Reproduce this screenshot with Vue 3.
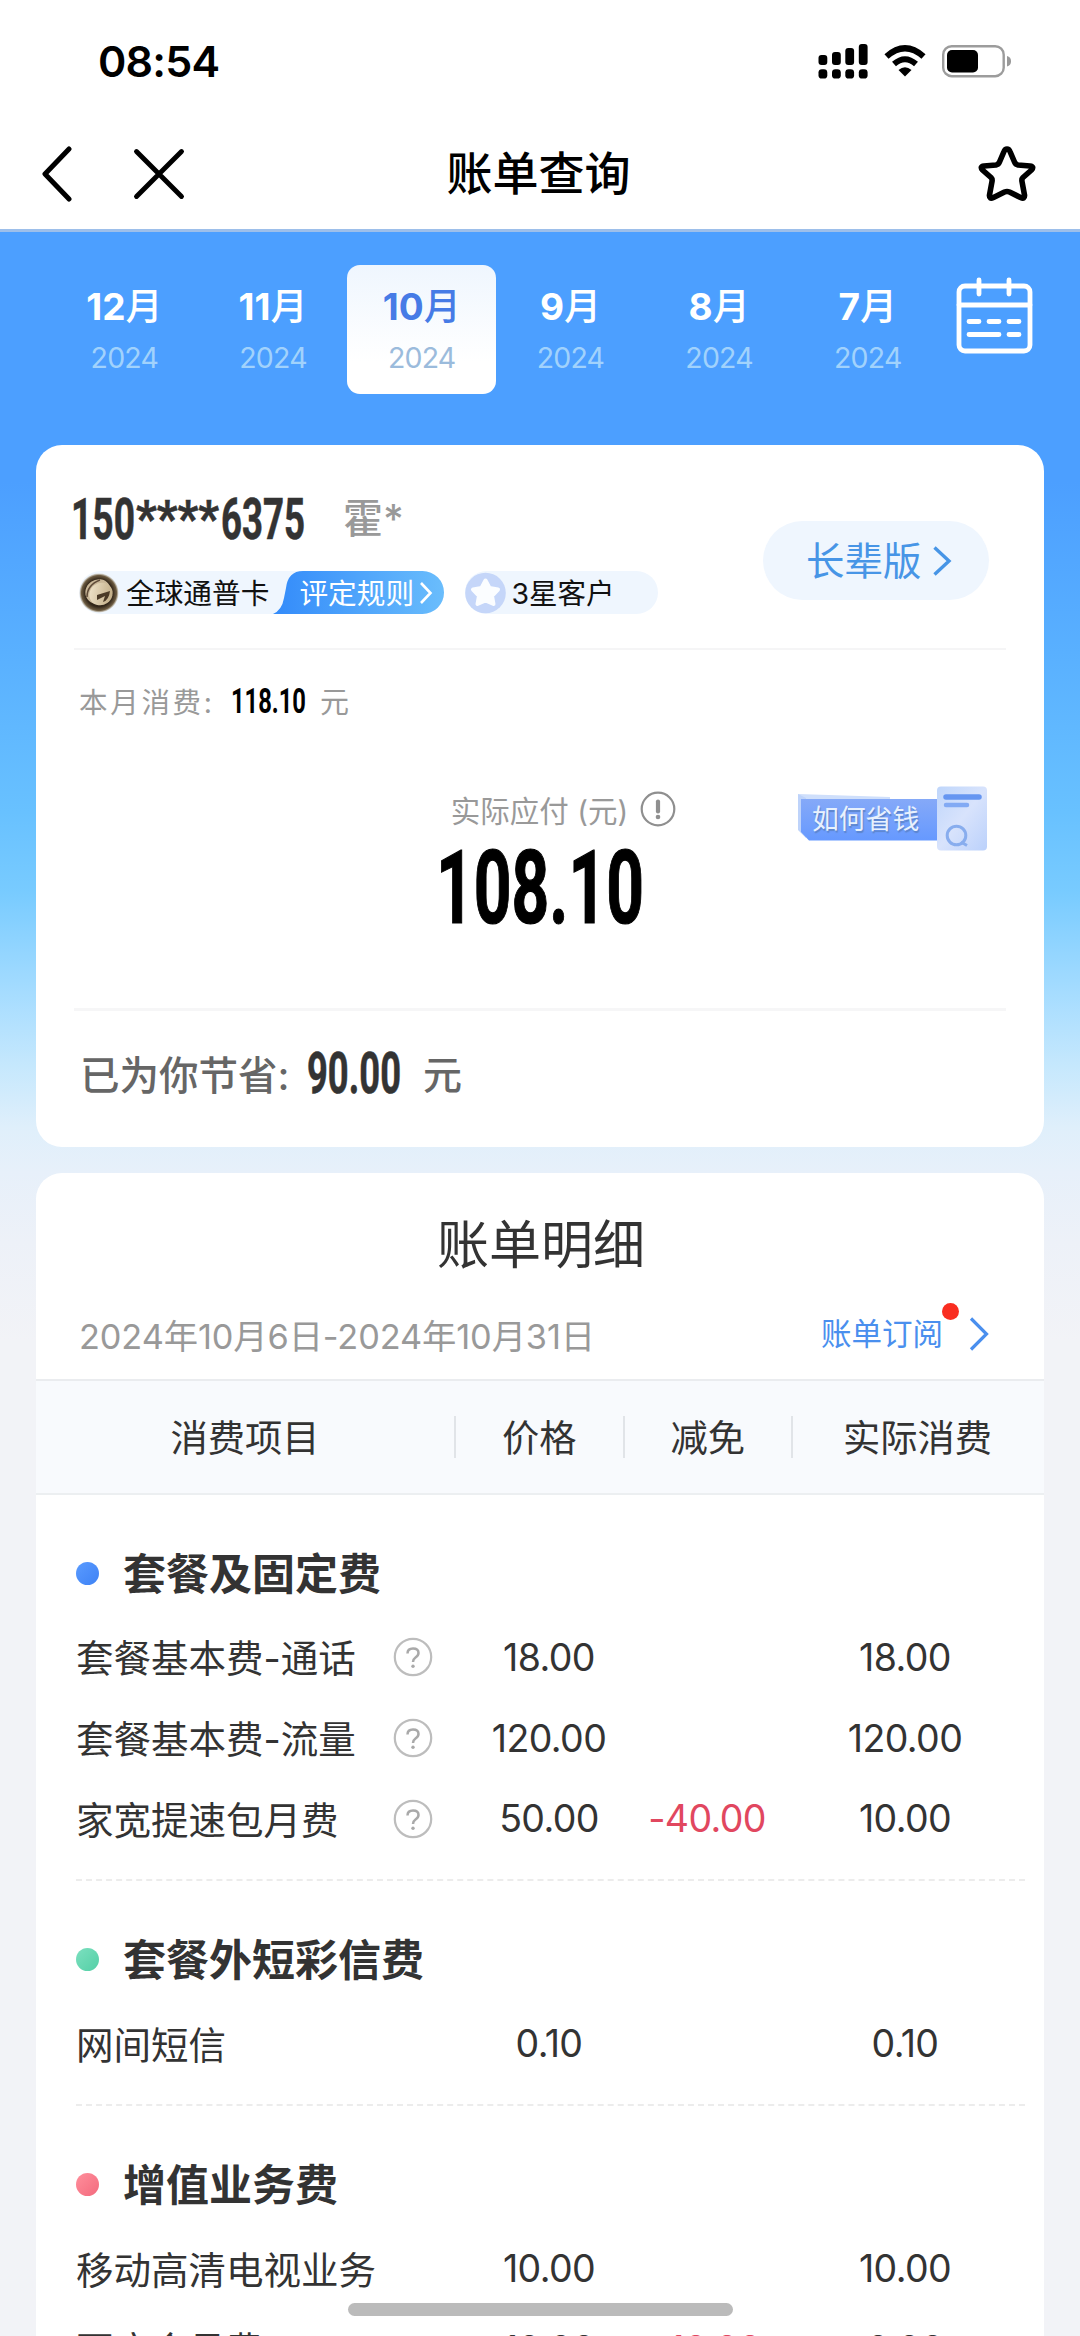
<script setup>
const months = [
  { m: '12', y: '2024' },
  { m: '11', y: '2024' },
  { m: '10', y: '2024', active: true },
  { m: '9', y: '2024' },
  { m: '8', y: '2024' },
  { m: '7', y: '2024' },
]

const sections = [
  {
    title: '套餐及固定费',
    tone: 'blue',
    rows: [
      { name: '套餐基本费-通话', help: true, price: '18.00', off: '', real: '18.00' },
      { name: '套餐基本费-流量', help: true, price: '120.00', off: '', real: '120.00' },
      { name: '家宽提速包月费', help: true, price: '50.00', off: '-40.00', real: '10.00' },
    ],
  },
  {
    title: '套餐外短彩信费',
    tone: 'green',
    rows: [{ name: '网间短信', price: '0.10', off: '', real: '0.10' }],
  },
  {
    title: '增值业务费',
    tone: 'red',
    rows: [
      { name: '移动高清电视业务', price: '10.00', off: '', real: '10.00' },
      { name: '百度会员费', price: '10.00', off: '-10.00', real: '0.00' },
    ],
  },
]
</script>

<template>
  <div class="screen">
    <div class="status">
      <span class="clock">08:54</span>
      <div class="status-icons">
        <svg class="signal" width="50" height="35" viewBox="0 0 50 35">
          <rect x="0.5" y="11" width="8.8" height="10" rx="3" />
          <rect x="14" y="8" width="8.8" height="13" rx="3" />
          <rect x="27.3" y="4" width="8.8" height="17" rx="3" />
          <rect x="40.8" y="0" width="8.8" height="21" rx="3" />
          <rect x="0.5" y="25.2" width="8.8" height="9.4" rx="3.4" />
          <rect x="14" y="25.2" width="8.8" height="9.4" rx="3.4" />
          <rect x="27.3" y="25.2" width="8.8" height="9.4" rx="3.4" />
          <rect x="40.8" y="25.2" width="8.8" height="9.4" rx="3.4" />
        </svg>
        <svg class="wifi" width="42" height="32" viewBox="0 0 42 32">
          <path d="M2.5 11.5 Q21 -5 39.5 11.5" fill="none" stroke="#000" stroke-width="6.2" />
          <path d="M10 19 Q21 9.500 32 19" fill="none" stroke="#000" stroke-width="6" />
          <path d="M14.500 25 Q21 19.500 27.500 25 L21 31.500 Z" />
        </svg>
        <svg class="battery" width="70" height="33" viewBox="0 0 70 33">
          <rect x="1.2" y="1.2" width="60.500" height="30" rx="8.500" fill="none" stroke="#9c9c9c" stroke-width="2.400" />
          <rect x="5" y="5" width="31" height="22.500" rx="5" />
          <path d="M65 11 Q69 12 69 16.300 Q69 20.500 65 21.500 Z" fill="#999" />
        </svg>
      </div>
    </div>

    <div class="nav">
      <div class="nav-left">
        <svg class="back" width="32" height="56" viewBox="0 0 32 56">
          <path d="M28 3 L4 28 L28 53" fill="none" stroke="#000" stroke-width="5" stroke-linecap="round" stroke-linejoin="round" />
        </svg>
        <svg width="52" height="52" viewBox="0 0 52 52">
          <path d="M3.500 3.500 L48.500 48.500 M48.500 3.500 L3.500 48.500" fill="none" stroke="#000" stroke-width="4.900" stroke-linecap="round" />
        </svg>
      </div>
      <h1>账单查询</h1>
      <svg class="fav" width="58" height="58" viewBox="0 0 58 58">
        <path d="M29 4 Q31 4 32 6.500 L36.500 17 Q37.500 19.500 40 20 L52 21 Q56.500 21.500 53.500 25 L45 32.500 Q43.500 34 44 36.500 L46.500 50 Q47 54.500 42.500 52.500 L31.500 47 Q29 46 26.500 47 L15.500 52.500 Q11 54.500 11.500 50 L14 36.500 Q14.500 34 13 32.500 L4.500 25 Q1.500 21.500 6 21 L18 20 Q20.500 19.500 21.500 17 L26 6.500 Q27 4 29 4 Z" fill="none" stroke="#000" stroke-width="5.600" stroke-linejoin="round" />
      </svg>
    </div>

    <div class="page">
      <div class="months">
        <div v-for="t in months" :key="t.m" class="month" :class="{ active: t.active }">
          <div class="m">{{ t.m }}<span>月</span></div>
          <div class="y">{{ t.y }}</div>
        </div>
        <svg class="calendar" width="77" height="77" viewBox="0 0 77 77">
          <g fill="none" stroke="#fff" stroke-width="4.800" stroke-linecap="round">
            <rect x="3" y="9" width="71" height="65" rx="6" />
            <path d="M3 28 H74" />
            <path d="M23 3 V17 M53 3 V17" />
            <path d="M13 44.500 H23 M33 44.500 H43 M53 44.500 H63 M13 57.500 H43 M53 57.500 H63" />
          </g>
        </svg>
      </div>

      <section class="card summary">
        <div class="user">
          <div class="who">
            <div class="id-line">
              <svg width="236" height="46" viewBox="0 0 236 46" class="din">
                <text y="43" font-size="57" fill="#333" stroke="#333" stroke-width="0.600"><tspan x="-1" textLength="64" lengthAdjust="spacingAndGlyphs">150</tspan><tspan x="64" textLength="83" lengthAdjust="spacingAndGlyphs" font-size="50" dy="-3">****</tspan><tspan x="149" dy="3" textLength="84" lengthAdjust="spacingAndGlyphs">6375</tspan></text>
              </svg>
              <span class="name">霍*</span>
            </div>
            <div class="tags">
              <div class="level">
                <svg class="coin" width="40" height="40" viewBox="0 0 40 40">
                  <defs>
                    <radialGradient id="coinEdge">
                      <stop offset="0.700" stop-color="#33271a" />
                      <stop offset="0.900" stop-color="#6d5c42" />
                      <stop offset="1" stop-color="#b5a88f" stop-opacity="0.400" />
                    </radialGradient>
                    <linearGradient id="coinFace" x1="0" y1="0" x2="1" y2="1">
                      <stop offset="0" stop-color="#f5ead2" />
                      <stop offset="1" stop-color="#b9a37b" />
                    </linearGradient>
                  </defs>
                  <circle cx="20" cy="20" r="19.500" fill="url(#coinEdge)" />
                  <ellipse cx="19" cy="18.500" rx="13" ry="12" transform="rotate(-35 19 18.500)" fill="#c9b798" />
                  <ellipse cx="22" cy="21" rx="12" ry="11" transform="rotate(-35 22 21)" fill="url(#coinFace)" />
                  <path d="M8 24 Q8 12 21 7" fill="none" stroke="#5f4b38" stroke-width="1.500" />
                  <path d="M18 22 L31 18 Q30 27 24 29 L26 23 L18 27 Z" fill="#4a3926" />
                </svg>
                <span class="level-name">全球通普卡</span>
                <div class="rule">
                  <svg class="rule-bg" width="171" height="43" viewBox="0 0 171 43">
                    <defs>
                      <linearGradient id="ruleFill">
                        <stop offset="0" stop-color="#338bfa" />
                        <stop offset="1" stop-color="#6abdfc" />
                      </linearGradient>
                    </defs>
                    <path d="M0 43 Q9 39 11 27 L13 17 Q15 0 30 0 H149.500 A21.500 21.500 0 0 1 149.500 43 Z" fill="url(#ruleFill)" />
                  </svg>
                  <span>评定规则</span>
                  <svg class="rule-arrow" width="14" height="24" viewBox="0 0 14 24">
                    <path d="M2 2 L11.500 12 L2 22" fill="none" stroke="#fff" stroke-width="2.600" />
                  </svg>
                </div>
              </div>
              <div class="star-tag">
                <svg width="41" height="42" viewBox="0 0 41 42">
                  <circle cx="20.500" cy="21" r="20.300" fill="#c5d6f9" />
                  <path d="M20.500 8.500 L24.500 16 L33 17.500 L27 23.800 L28.500 32 L20.500 28.500 L12.500 32 L14 23.800 L8 17.500 L16.500 16 Z" fill="#fbfdff" stroke="#fbfdff" stroke-width="4" stroke-linejoin="round" />
                </svg>
                <span>3星客户</span>
              </div>
            </div>
          </div>
          <div class="elder">
            <span>长辈版</span>
            <svg width="20" height="32" viewBox="0 0 20 32">
              <path d="M2.500 2.500 L17 16 L2.500 29.500" fill="none" stroke="#4795e6" stroke-width="3.400" />
            </svg>
          </div>
        </div>

        <div class="due">
          <div class="spent">
            <span class="spent-label">本月消费:</span>
            <svg width="76" height="30" viewBox="0 0 76 30" class="din">
              <text x="1" y="27" textLength="75" lengthAdjust="spacingAndGlyphs" font-size="35" fill="#000">118.10</text>
            </svg>
            <span class="yuan">元</span>
          </div>
          <div class="pay">
            <div class="pay-label">
              <span>实际应付 (元)</span>
              <svg width="36" height="36" viewBox="0 0 36 36">
                <circle cx="18" cy="18" r="16.300" fill="none" stroke="#8f8f8f" stroke-width="2.200" />
                <path d="M18 10.500 V20.500" stroke="#8f8f8f" stroke-width="4.200" stroke-linecap="round" />
                <circle cx="18" cy="26" r="2.300" fill="#8f8f8f" />
              </svg>
            </div>
            <svg width="202" height="80" viewBox="0 0 202 80" class="din amount">
              <text x="-3" y="76.500" textLength="208" lengthAdjust="spacingAndGlyphs" font-size="102" fill="#000" stroke="#000" stroke-width="1.200">108.10</text>
            </svg>
          </div>
          <div class="save-tip">
            <svg class="tip-bg" width="190" height="66" viewBox="0 0 190 66">
              <defs>
                <linearGradient id="tipFill" x1="0" y1="0" x2="0" y2="1">
                  <stop offset="0" stop-color="#85a9f8" />
                  <stop offset="1" stop-color="#6699ff" />
                </linearGradient>
                <linearGradient id="docFill" x1="0" y1="0" x2="1" y2="1">
                  <stop offset="0" stop-color="#bfd6fb" />
                  <stop offset="0.500" stop-color="#d8e3fc" />
                  <stop offset="1" stop-color="#bbd1fb" />
                </linearGradient>
              </defs>
              <path d="M0 8 L92 11 V16 H4 V46 Z" fill="#cfdffb" />
              <path d="M0 8 V44 L8 52 L8 12 Z" fill="#bed3fa" />
              <path d="M3 13 H140 V54.500 H11 L3 46 Z" fill="url(#tipFill)" />
              <rect x="139" y="0.500" width="50" height="64" rx="4" fill="url(#docFill)" />
              <path d="M148 11 H181" stroke="#6696f1" stroke-width="5.500" stroke-linecap="round" />
              <path d="M148 19 H169" stroke="#82aaf4" stroke-width="4.500" stroke-linecap="round" />
              <circle cx="158.500" cy="49.500" r="9.300" fill="none" stroke="#88adee" stroke-width="3" />
              <path d="M163 56 L169 59.500" stroke="#88adee" stroke-width="3" />
            </svg>
            <span>如何省钱</span>
          </div>
        </div>

        <div class="saved">
          <span class="saved-label">已为你节省<em>:</em></span>
          <svg width="94" height="46" viewBox="0 0 94 46" class="din">
            <text x="0" y="43" textLength="94" lengthAdjust="spacingAndGlyphs" font-size="57" fill="#333" stroke="#333" stroke-width="0.600">90.00</text>
          </svg>
          <span class="saved-yuan">元</span>
        </div>
      </section>

      <section class="card detail">
        <h2>账单明细</h2>
        <div class="period">
          <span class="range">2024年10月6日-2024年10月31日</span>
          <div class="subscribe">
            <span>账单订阅<b class="badge"></b></span>
            <svg width="22" height="36" viewBox="0 0 22 36">
              <path d="M3 2.500 L18.500 18 L3 33.500" fill="none" stroke="#4a8fee" stroke-width="3.200" />
            </svg>
          </div>
        </div>
        <div class="thead">
          <span class="th item">消费项目</span>
          <span class="th">价格</span>
          <span class="th">减免</span>
          <span class="th last">实际消费</span>
        </div>
        <div v-for="s in sections" :key="s.title" class="group">
          <div class="group-title"><i :class="s.tone"></i><span>{{ s.title }}</span></div>
          <div v-for="r in s.rows" :key="r.name" class="row">
            <span class="label">{{ r.name }}</span>
            <span class="help">
              <svg v-if="r.help" width="40" height="40" viewBox="0 0 40 40">
                <circle cx="20" cy="20" r="18.200" fill="none" stroke="#bdbdbd" stroke-width="2.200" />
                <path d="M14.500 16.500 Q14.500 11.500 20 11.500 Q25.500 11.500 25.500 16 Q25.500 18.500 22.500 20.500 Q20 22.300 20 25" fill="none" stroke="#a9a9a9" stroke-width="2.500" />
                <circle cx="20" cy="29.300" r="1.700" fill="#a9a9a9" />
              </svg>
            </span>
            <span class="num price">{{ r.price }}</span>
            <span class="num off">{{ r.off }}</span>
            <span class="num real">{{ r.real }}</span>
          </div>
        </div>
      </section>
    </div>
    <div class="home-bar"></div>
  </div>
</template>

<style>
body {
  margin: 0;
  background: #fff;
}
</style>

<style scoped>
.screen {
  position: relative;
  width: 1080px;
  height: 2336px;
  overflow: hidden;
  background: #fff;
  color: #333;
  font-family: Inter, "Noto Sans CJK SC", sans-serif;
  white-space: nowrap;
}
svg {
  display: block;
  flex: none;
}
.din {
  font-family: Roboto, sans-serif;
  font-weight: 700;
  overflow: visible;
}

.status {
  display: flex;
  justify-content: space-between;
  height: 122px;
  padding: 0 68px 0 98px;
  align-items: center;
  box-sizing: border-box;
}
.clock {
  font-size: 43px;
  font-weight: 600;
  color: #000;
  letter-spacing: -0.8px;
}
.status-icons {
  display: flex;
  align-items: center;
}
.wifi {
  margin-left: 16px;
}
.battery {
  margin-left: 16px;
}

.nav {
  display: grid;
  grid-template-columns: 1fr auto 1fr;
  align-items: center;
  height: 107px;
  padding: 0 44px 4px 41px;
  box-sizing: border-box;
}
.nav-left {
  display: flex;
  align-items: center;
  gap: 60px;
}
.nav h1 {
  margin: 0;
  padding-bottom: 2px;
  font-size: 46px;
  line-height: 60px;
  font-weight: 500;
  color: #000;
}
.fav {
  justify-self: end;
}

.page {
  height: 2107px;
  box-sizing: border-box;
  border-top: 3px solid #9dbfea;
  padding: 0 36px;
  background: linear-gradient(
    #4c9fff 0,
    #4c9fff 250px,
    #59b0ff 420px,
    #68c1ff 580px,
    #78cbff 660px,
    #a5dcff 760px,
    #c6e8fd 835px,
    #dfeffb 895px,
    #e7f0fa 940px,
    #edf1f8 1010px,
    #f2f3f7 1110px
  );
}
.months {
  display: flex;
  height: 213px;
  padding: 33px 0 0 14px;
  box-sizing: border-box;
}
.month {
  width: 148.700px;
  height: 129px;
  border-radius: 13px;
  text-align: center;
  color: #fff;
  flex: none;
}
.m {
  margin-top: 21px;
  height: 42px;
  font-size: 37px;
  line-height: 42px;
  font-weight: 700;
}
.m span {
  font-weight: 500;
}
.y {
  margin-top: 10px;
  font-size: 28.500px;
  line-height: 40px;
  letter-spacing: -0.8px;
  color: #a1d2fc;
}
.month.active {
  background: linear-gradient(#eff6fe, #fff 75%);
  color: #467be6;
}
.active .y {
  color: #9bbbdc;
}
.calendar {
  margin: 12px 0 0 14px;
}

.card {
  background: #fff;
  border-radius: 26px;
}
.summary {
  height: 702px;
  padding: 0 38px;
  box-sizing: border-box;
}
.user {
  display: flex;
  justify-content: space-between;
  height: 205px;
  box-sizing: border-box;
  border-bottom: 2px solid #f5f5f6;
}
.who {
  padding-top: 51px;
}
.id-line {
  display: flex;
  margin-left: -2px;
  height: 46px;
}
.name {
  margin-left: 35px;
  font-size: 40px;
  line-height: 46px;
  font-weight: 500;
  color: #999;
}
.tags {
  display: flex;
  margin-top: 29px;
  padding-left: 5px;
}
.level {
  display: flex;
  align-items: center;
  height: 43px;
  border-radius: 22px;
  background: #eff6fe;
  font-size: 28.700px;
  color: #111;
}
.level-name {
  margin: 0 4px 0 7px;
  padding-bottom: 2px;
}
.rule {
  position: relative;
  display: flex;
  align-items: center;
  width: 171px;
  height: 43px;
  color: #fff;
}
.rule-bg {
  position: absolute;
  left: 0;
  top: 0;
}
.rule span {
  position: relative;
  margin-left: 26px;
  padding-bottom: 2px;
}
.rule-arrow {
  position: relative;
  margin-left: 5px;
}
.star-tag {
  display: flex;
  align-items: center;
  width: 193px;
  height: 43px;
  margin-left: 21px;
  border-radius: 22px;
  background: #eff6fe;
  font-size: 28.500px;
  color: #111;
}
.star-tag span {
  margin-left: 5px;
  padding-bottom: 2px;
}
.elder {
  display: flex;
  align-items: center;
  width: 226px;
  height: 79px;
  margin: 76px 17px 0 0;
  padding-left: 43px;
  box-sizing: border-box;
  border-radius: 40px;
  background: #eff6fe;
  font-size: 38.500px;
  color: #4795e6;
}
.elder span {
  padding-bottom: 6px;
}
.elder svg {
  margin-left: 10px;
}

.due {
  position: relative;
  height: 361px;
  box-sizing: border-box;
  border-bottom: 3px solid #f6f6f7;
}
.spent {
  display: flex;
  align-items: center;
  height: 102px;
  padding-left: 5px;
  font-size: 28.500px;
  color: #999;
}
.spent-label {
  width: 151px;
  padding-bottom: 2px;
  letter-spacing: 2.700px;
}
.yuan {
  margin-left: 14px;
  padding-bottom: 2px;
  font-size: 29px;
}
.pay {
  display: flex;
  flex-direction: column;
  align-items: center;
  padding-top: 39px;
}
.pay-label {
  display: flex;
  align-items: center;
  gap: 12px;
  height: 36px;
  margin-left: 47px;
  font-size: 29.500px;
  color: #999;
}
.amount {
  margin-top: 19px;
}
.save-tip {
  position: absolute;
  left: 724px;
  top: 136px;
  width: 190px;
  height: 66px;
}
.tip-bg {
  position: absolute;
}
.save-tip span {
  position: relative;
  display: block;
  margin-left: 14px;
  font-size: 26.800px;
  line-height: 67px;
  color: #e8f1fd;
  font-weight: 400;
  text-shadow: 1px 2px 1px #5c85cc;
}
.saved {
  display: flex;
  align-items: center;
  height: 124px;
  padding-left: 6px;
}
.saved-label {
  width: 227px;
  padding-bottom: 2px;
  font-size: 39.500px;
  font-weight: 500;
  color: #666;
}
.saved-label em {
  font-style: normal;
}
.saved-yuan {
  margin-left: 22px;
  padding-bottom: 2px;
  font-size: 39px;
  font-weight: 500;
  color: #666;
}

.detail {
  margin-top: 26px;
  height: 1300px;
}
.detail h2 {
  margin: 0;
  padding: 38px 0 0 2px;
  height: 68px;
  line-height: 70px;
  text-align: center;
  font-size: 52px;
  font-weight: 400;
}
.period {
  display: flex;
  justify-content: space-between;
  align-items: center;
  height: 100px;
  padding: 0 54px 0 43px;
  box-sizing: border-box;
}
.range {
  padding-top: 10px;
  font-size: 34.300px;
  color: #999;
  letter-spacing: -0.1px;
}
.subscribe {
  display: flex;
  align-items: center;
  gap: 25px;
  padding-top: 10px;
  font-size: 30.500px;
  color: #4a8fee;
}
.subscribe span {
  position: relative;
  padding-bottom: 4px;
}
.badge {
  position: absolute;
  right: -16px;
  top: -7px;
  width: 17px;
  height: 17px;
  border-radius: 50%;
  background: #f92d20;
}
.thead {
  display: flex;
  align-items: center;
  height: 116px;
  box-sizing: border-box;
  border-top: 2px solid #eaecef;
  border-bottom: 2px solid #eceff1;
  background: #f8fafd;
  font-size: 37.300px;
}
.th {
  width: 168.500px;
  height: 42px;
  line-height: 45px;
  box-sizing: border-box;
  border-right: 2px solid #e1e4e8;
  text-align: center;
}
.th.item {
  width: 420px;
}
.th.last {
  width: 249px;
  border-right: 0;
}
.group {
  margin: 0 19px 0 40px;
  padding-bottom: 20px;
  border-bottom: 2px dashed #ececec;
}
.group-title {
  display: flex;
  align-items: center;
  height: 80px;
  padding: 38px 0 4px;
  font-size: 43px;
  font-weight: 700;
}
.group-title i {
  width: 23px;
  height: 23px;
  margin-right: 24px;
  border-radius: 50%;
}
.group-title span {
  padding-bottom: 4px;
}
.blue {
  background: linear-gradient(135deg, #5a9bff, #3e82f5);
}
.green {
  background: linear-gradient(135deg, #7ce0bf, #54cfa6);
}
.red {
  background: linear-gradient(135deg, #ff8f9c, #f36a7d);
}
.row {
  display: flex;
  align-items: center;
  height: 80.800px;
  font-size: 37.500px;
}
.row > span {
  flex: none;
}
.label {
  width: 317px;
  padding-bottom: 3px;
}
.help {
  width: 40px;
}
.num {
  text-align: center;
  font-size: 37.500px;
  letter-spacing: -0.6px;
}
.price {
  width: 232px;
}
.off {
  width: 84px;
  display: flex;
  justify-content: center;
  color: #e1475f;
}
.real {
  width: 312px;
}
.home-bar {
  position: absolute;
  left: 348px;
  top: 2303px;
  width: 385px;
  height: 13px;
  border-radius: 7px;
  background: #bbb;
}
</style>
